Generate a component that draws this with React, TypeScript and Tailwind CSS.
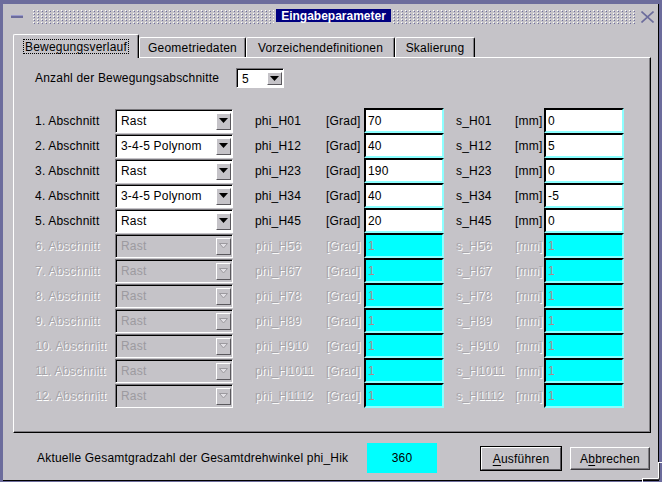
import React from 'react';

const idx = ['01', '12', '23', '34', '45', '56', '67', '78', '89', '910', '1011', '1112'];

const active = [
  { typ: 'Rast', phi: '70', s: '0' },
  { typ: '3-4-5 Polynom', phi: '40', s: '5' },
  { typ: 'Rast', phi: '190', s: '0' },
  { typ: '3-4-5 Polynom', phi: '40', s: '-5' },
  { typ: 'Rast', phi: '20', s: '0' },
];

const off = 'text-[#a6a4a9] [text-shadow:1px_1px_0_#ffffff]';

const Arrow: React.FC<{ disabled?: boolean }> = ({ disabled }) => (
  <svg width="9" height="6" viewBox="0 0 9 6">
    {disabled ? (
      <path d="M0.5 0.5h8L4.5 5z" fill="#e2e0e5" stroke="#9c9a9f" strokeWidth="1" />
    ) : (
      <path d="M0 0h9L4.5 5z" fill="#000" />
    )}
  </svg>
);

const Combo: React.FC<{ value: string; disabled?: boolean; className: string }> = ({ value, disabled, className }) => (
  <div className={`flex border border-t-[#77757a] border-l-[#77757a] border-b-white border-r-white ${className}`}>
    <div
      className={`flex flex-1 items-center border-t border-l border-t-black border-l-black ${
        disabled ? 'bg-[#c5c3c8] text-[#9c9a9f]' : 'bg-white text-black'
      }`}
    >
      <span className="flex-1 pl-[4px] leading-none">{value}</span>
      <div className="mr-[1px] flex h-[calc(100%-4px)] w-[15px] items-center justify-center border border-t-white border-l-white border-b-[#5a585d] border-r-[#5a585d] bg-[#c5c3c8]">
        <Arrow disabled={disabled} />
      </div>
    </div>
  </div>
);

const Field: React.FC<{ value: string; disabled?: boolean }> = ({ value, disabled }) => (
  <div
    className={`flex h-[25px] w-[80px] items-center border-2 border-t-black border-l-black border-b-[#8cffff] border-r-[#8cffff] pl-[2px] ${
      disabled ? 'bg-[#00ffff] text-[#a88c8c]' : 'bg-white text-black'
    }`}
  >
    {value}
  </div>
);

const Dots: React.FC<{ w: number; id: string }> = ({ w, id }) => (
  <svg width={w} height="14">
    <defs>
      <pattern id={id} width="4" height="3" patternUnits="userSpaceOnUse">
        <rect x="0" y="0" width="1" height="1" fill="#ffffff" />
        <rect x="1" y="1" width="1" height="1" fill="#6c6c9c" />
      </pattern>
    </defs>
    <rect width={w} height="14" fill={`url(#${id})`} />
  </svg>
);

const Tab: React.FC<{ label: string; className: string }> = ({ label, className }) => (
  <div
    className={`flex h-[20px] items-center justify-center rounded-t-[2px] border-t border-l border-r border-t-white border-l-white border-r-black bg-[#c5c3c8] shadow-[inset_-1px_0_0_#807e83] ${className}`}
  >
    {label}
  </div>
);

const App: React.FC = () => {
  return (
    <div className="relative h-[482px] w-[662px] bg-[#6c6c9c] pt-[4px] pr-[3px] pb-[1px] pl-[3px] font-['Liberation_Sans',Arial,sans-serif] text-[12px] tracking-[0.2px] text-black">
      <div className="flex h-full flex-col border-r border-b border-r-black border-b-black bg-[#c5c3c8]">
        {/* title bar */}
        <div className="flex h-[24px] items-start">
          <div className="mt-[11px] ml-[8px] h-[3px] w-[12px] border-t border-t-[#9a9acc] bg-[#6c6c9c]" />
          <div className="mt-[6px] ml-[10px]">
            <Dots w={241} id="dl" />
          </div>
          <div className="mt-[5px] ml-[2px] flex h-[13px] w-[115px] items-center justify-center bg-[#000080] text-[12px] leading-none font-bold tracking-normal text-white">
            Eingabeparameter
          </div>
          <div className="mt-[6px] ml-[2px]">
            <Dots w={243} id="dr" />
          </div>
          <svg className="mt-[7px] ml-[5px]" width="13" height="12" viewBox="0 0 13 12">
            <path d="M0.5 0.5L12.5 11.5M12.5 0.5L0.5 11.5" stroke="#6c6c9c" strokeWidth="1.6" />
          </svg>
        </div>

        {/* tabs */}
        <div className="mt-[6px] ml-[10px] flex h-[23px] items-end">
          <div className="relative z-10 -mb-px flex h-[24px] w-[126px] items-center justify-center rounded-t-[2px] border-t border-l border-r border-t-white border-l-white border-r-black bg-[#c5c3c8] shadow-[inset_-1px_0_0_#807e83]">
            <span className="flex h-[15px] items-center border border-dotted border-black px-[1px] leading-none">
              Bewegungsverlauf
            </span>
          </div>
          <Tab label="Geometriedaten" className="w-[107px]" />
          <Tab label="Vorzeichendefinitionen" className="w-[149px]" />
          <Tab label="Skalierung" className="w-[80px]" />
        </div>

        {/* panel */}
        <div className="ml-[10px] flex h-[376px] w-[638px] flex-col border-t border-l border-r border-b border-t-white border-l-white border-r-black border-b-black pl-[21px] shadow-[inset_-1px_-1px_0_#807e83]">
          <div className="mt-[10px] flex h-[20px] items-center">
            <span className="w-[201px]">Anzahl der Bewegungsabschnitte</span>
            <Combo value="5" className="h-[20px] w-[48px]" />
          </div>

          <div className="mt-[20px] flex flex-col">
            {idx.map((k, i) => {
              const row = active[i];
              const dis = !row;
              const lbl = dis ? off : '';
              return (
                <div key={k} className="flex h-[25px] items-center">
                  <span className={`w-[80px] ${lbl}`}>{i + 1}. Abschnitt</span>
                  <Combo value={row ? row.typ : 'Rast'} disabled={dis} className="h-[24px] w-[118px]" />
                  <span className={`ml-[22px] w-[71px] ${lbl}`}>phi_H{k}</span>
                  <span className={`w-[38px] ${lbl}`}>[Grad]</span>
                  <Field value={row ? row.phi : '1'} disabled={dis} />
                  <span className={`ml-[12px] w-[59px] ${lbl}`}>s_H{k}</span>
                  <span className={`w-[29px] ${lbl}`}>[mm]</span>
                  <Field value={row ? row.s : '1'} disabled={dis} />
                </div>
              );
            })}
          </div>
        </div>

        {/* bottom */}
        <div className="flex flex-1 items-start">
          <span className="mt-[10px] flex h-[30px] w-[364px] items-center pl-[34px]">
            Aktuelle Gesamtgradzahl der Gesamtdrehwinkel phi_Hik
          </span>
          <div className="mt-[10px] flex h-[30px] w-[70px] items-center justify-center bg-[#00ffff]">360</div>
          <div className="mt-[13px] ml-[43px] h-[25px] w-[82px] border border-black">
            <button className="flex h-full w-full items-center justify-center border border-t-white border-l-white border-b-[#5a585d] border-r-[#5a585d] bg-[#c5c3c8]">
              <span className="underline underline-offset-2">A</span>usführen
            </button>
          </div>
          <button className="mt-[14px] ml-[8px] flex h-[23px] w-[80px] items-center justify-center border border-t-white border-l-white border-b-[#3a383d] border-r-[#3a383d] bg-[#c5c3c8] shadow-[inset_-1px_-1px_0_#807e83]">
            A<span className="underline underline-offset-2">b</span>brechen
          </button>
        </div>
      </div>

      {/* resize corner */}
      <svg className="absolute right-0 bottom-0" width="22" height="22" viewBox="0 0 22 22">
        <path d="M18.5 2V18.5H2" fill="none" stroke="#ffffff" strokeWidth="1" />
        <path d="M2.5 18V22M18 2.5H22" fill="none" stroke="#ffffff" strokeWidth="1" />
        <path d="M19.5 3V19.5H3" fill="none" stroke="#3a383d" strokeWidth="1" />
      </svg>
    </div>
  );
};

export default App;
